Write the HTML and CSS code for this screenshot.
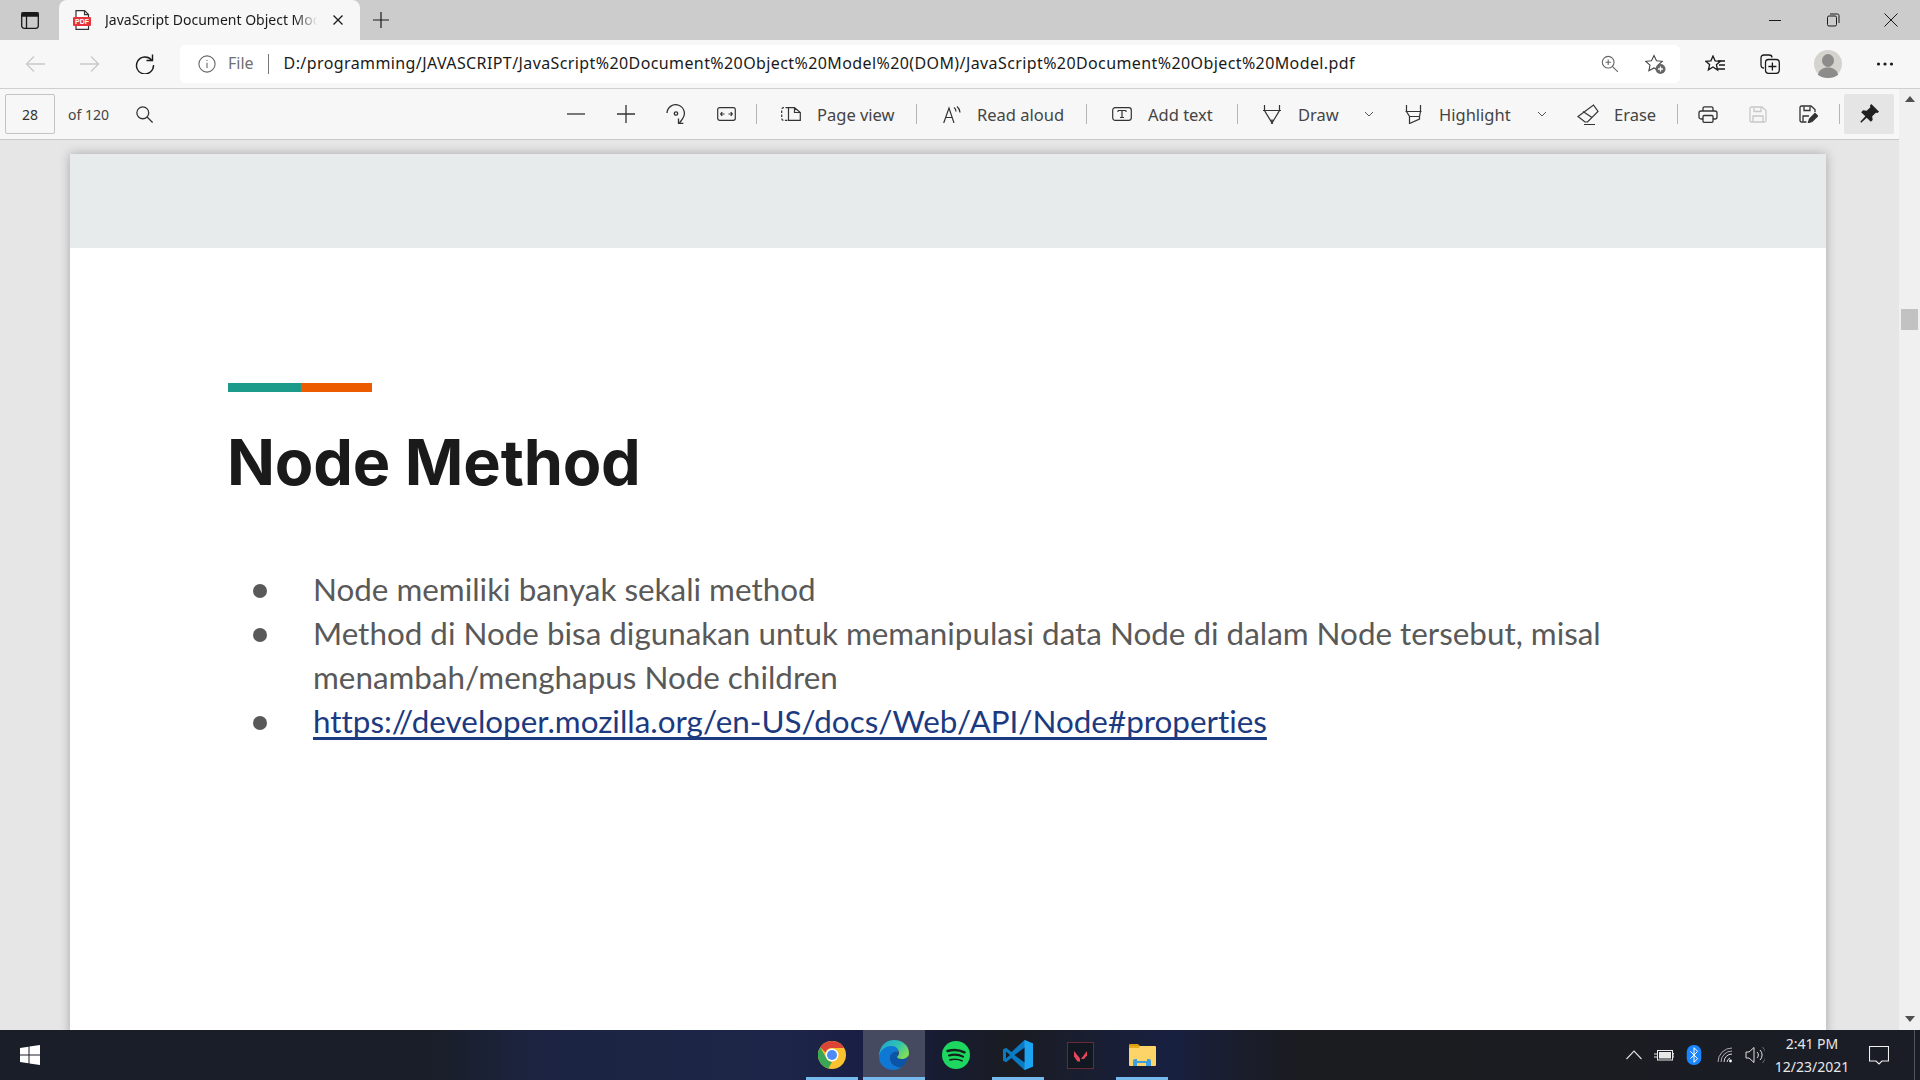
FILE: index.html
```html
<!DOCTYPE html>
<html lang="en">
<head>
<meta charset="utf-8">
<title>JavaScript Document Object Model</title>
<link rel="stylesheet" href="styles.css">
</head>
<body>
<div class="tabstrip">
  <button class="tabs-menu"><svg width="18" height="17" viewBox="0 0 18 17" fill="none" stroke="#1a1a1a" stroke-width="1.300"><rect x=".7" y=".7" width="16.600" height="15.600" rx="2.500"/><path d="M5.500 4v12.300"/><path d="M1 1h16v3H1z" fill="#1a1a1a"/></svg></button>
  <div class="tab">
    <svg class="favicon" width="18" height="20" viewBox="0 0 18 20"><path d="M3 .6h8.500L15.500 4.600V19.400H3z" fill="#fff" stroke="#333" stroke-width="1.200"/><path d="M11.500 .6v4h4" fill="none" stroke="#333" stroke-width="1.200"/><rect x="0" y="7" width="18" height="9" rx="1" fill="#e8323c"/><text x="9" y="14.200" text-anchor="middle" class="pdf-label">PDF</text></svg>
    <span class="tab-title">JavaScript Document Object Model</span>
    <svg class="tab-close" width="10" height="10" viewBox="0 0 10 10" stroke="#1a1a1a" stroke-width="1.300"><path d="M.5.500l9 9M9.500.500l-9 9"/></svg>
  </div>
  <svg class="new-tab" width="16" height="16" viewBox="0 0 16 16" stroke="#1a1a1a" stroke-width="1.200"><path d="M8 0v16M0 8h16"/></svg>
  <div class="window-controls">
    <svg width="58" height="12" viewBox="0 0 12 12" stroke="#1a1a1a" stroke-width="1"><path d="M0 6.500h12"/></svg>
    <svg width="58" height="14" viewBox="0 0 14 14" fill="none" stroke="#1a1a1a" stroke-width="1"><rect x="1.500" y="3" width="9" height="10" rx="1.500"/><path d="M4 1h7.500a1.500 1.500 0 0 1 1.500 1.500V10"/></svg>
    <svg width="58" height="14" viewBox="0 0 14 14" stroke="#1a1a1a" stroke-width="1"><path d="M0.500 0.500l13 13M13.500 0.500l-13 13"/></svg>
  </div>
</div>

<div class="navbar">
  <svg class="nav-back" width="20" height="18" viewBox="0 0 20 18" fill="none" stroke="#c9c9c9" stroke-width="1.300"><path d="M20 9H1.500M9 1.500L1.500 9 9 16.500"/></svg>
  <svg class="nav-forward" width="20" height="18" viewBox="0 0 20 18" fill="none" stroke="#c9c9c9" stroke-width="1.300"><path d="M0 9h18.500M11 1.500L18.500 9 11 16.500"/></svg>
  <svg class="nav-reload" width="20" height="20" viewBox="0 0 20 20" fill="none" stroke="#1a1a1a" stroke-width="1.400"><path d="M16.500 6A8.500 8.500 0 1 0 18.500 11"/><path d="M17.500 0.500V6.500h-6"/></svg>
  <div class="address">
    <svg width="18" height="18" viewBox="0 0 20 20" fill="none" stroke="#666" stroke-width="1.200"><circle cx="10" cy="10" r="9"/><path d="M10 8.500v6M10 5.500v1.300"/></svg>
    <span class="addr-file">File</span>
    <span class="addr-sep"></span>
    <span class="addr-url">D:/programming/JAVASCRIPT/JavaScript%20Document%20Object%20Model%20(DOM)/JavaScript%20Document%20Object%20Model.pdf</span>
    <svg class="addr-zoom" width="18" height="18" viewBox="0 0 20 20" fill="none" stroke="#666" stroke-width="1.200"><circle cx="8" cy="8" r="6.500"/><path d="M12.800 12.800l6 6M8 5v6M5 8h6"/></svg>
    <svg class="addr-fav" width="22" height="20" viewBox="0 0 22 20"><path d="M10 1.500l2.500 5.200 5.700.6-4.200 3.900 1.100 5.500-5.100-2.800-5.100 2.800L6 11.200 1.800 7.300l5.700-.6z" fill="none" stroke="#444" stroke-width="1.100"/><circle cx="16.500" cy="15" r="5" fill="#666"/><path d="M16.500 12.500v5M14 15h5" stroke="#fff" stroke-width="1.300"/></svg>
  </div>
  <svg class="nav-favs" width="20" height="18" viewBox="0 0 20 18" fill="none" stroke="#1a1a1a" stroke-width="1.300"><path d="M8 1l2.100 4.800 5.200.5-3.900 3.400 1.200 5.300L8 12l-4.600 2.900 1.200-5.300L.7 6.300l5.200-.5z"/><path d="M13 6h7M14 10h6M13 14h7"/></svg>
  <svg class="nav-coll" width="20" height="20" viewBox="0 0 20 20" fill="none" stroke="#1a1a1a" stroke-width="1.300"><path d="M4 14c-2 0-3-1-3-3V4c0-2 1-3 3-3h5c2 0 3 1 3 2.500"/><rect x="5.500" y="5.500" width="13.800" height="13.800" rx="3"/><path d="M12.400 8.500v8M8.400 12.500h8"/></svg>
  <svg class="nav-avatar" width="28" height="28" viewBox="0 0 28 28"><circle cx="14" cy="14" r="14" fill="#d4d3ce"/><ellipse cx="14" cy="10.500" rx="6" ry="6.500" fill="#8c8c8a"/><path d="M4 25c.5-5 5-7.500 10-7.500S23.500 20 24 25c-2.800 2-6 3-10 3s-7.200-1-10-3z" fill="#8c8c8a"/></svg>
  <svg class="nav-more" width="18" height="4" viewBox="0 0 18 4" fill="#1a1a1a"><circle cx="2.500" cy="2" r="1.600"/><circle cx="9" cy="2" r="1.600"/><circle cx="15.500" cy="2" r="1.600"/></svg>
</div>

<div class="workspace">
  <div class="viewer-col">
    <div class="pdfbar">
      <div class="page-box">28</div>
      <span class="page-total">of 120</span>
      <svg class="pdf-search" width="17" height="17" viewBox="0 0 20 20" fill="none" stroke="#333" stroke-width="1.500"><circle cx="8" cy="8" r="7"/><path d="M13 13l6.500 6.500"/></svg>

      <div class="tools">
        <div class="icon-btn"><svg width="18" height="18" viewBox="0 0 18 18" stroke="#333" stroke-width="1.300"><path d="M0 9h18"/></svg></div>
        <div class="icon-btn"><svg width="18" height="18" viewBox="0 0 18 18" stroke="#333" stroke-width="1.300"><path d="M0 9h18M9 0v18"/></svg></div>
        <div class="icon-btn"><svg width="20" height="20" viewBox="0 0 20 20" fill="none" stroke="#333" stroke-width="1.300"><path d="M1 9a8.700 8.700 0 1 1 15.500 5.800L13.500 19"/><path d="M12.500 14.500v4.800h4.800"/><circle cx="10" cy="9.500" r="1.700"/></svg></div>
        <div class="icon-btn"><svg width="19" height="14" viewBox="0 0 19 14" fill="none" stroke="#333" stroke-width="1.200"><rect x=".7" y=".7" width="17.600" height="12.600" rx="2"/><path d="M3.500 7h4M3.500 7l1.800-1.800M3.500 7l1.800 1.800M11.500 7h4M15.500 7l-1.800-1.800M15.500 7l-1.800 1.800"/></svg></div>
        <span class="sep sep-first"></span>
        <div class="tool tool-page"><svg width="20" height="14" viewBox="0 0 20 14" fill="none" stroke="#333" stroke-width="1.200"><path d="M7 .7H2.500A1.800 1.800 0 0 0 .7 2.500v9a1.800 1.800 0 0 0 1.800 1.800H7" stroke-dasharray="2.500 1.500"/><path d="M7.500.7h6l5.800 4.800v7.800H7.500zM13.500.7v4.800h5.800"/></svg><span>Page view</span></div>
        <span class="sep"></span>
        <div class="tool tool-read"><svg width="19" height="17" viewBox="0 0 19 17" fill="none" stroke="#333" stroke-width="1.200"><path d="M.7 17L6 2l5 15M2.500 11.500h7"/><path d="M11 1.500a5 5 0 0 1 2 4M14 .5a8 8 0 0 1 3 6"/></svg><span>Read aloud</span></div>
        <span class="sep"></span>
        <div class="tool tool-add"><svg width="20" height="14" viewBox="0 0 20 14" fill="none" stroke="#333" stroke-width="1.200"><rect x=".7" y=".7" width="18.600" height="12.600" rx="2.500"/><path d="M6 3.500h8M10 3.500v7M8 10.500h4M6 3.500V5M14 3.500V5"/></svg><span>Add text</span></div>
        <span class="sep"></span>
        <div class="tool tool-draw"><svg width="20" height="19" viewBox="0 0 20 19" fill="none" stroke="#333" stroke-width="1.200"><path d="M2.500 0v5.500L10 18l7.500-12.500V0M1 5.500h18"/><path d="M10 14.500V19" stroke-width="1.600"/></svg><span>Draw</span><svg class="chev" width="10" height="6" viewBox="0 0 10 6" fill="none" stroke="#555" stroke-width="1"><path d="M1 1l4 4 4-4"/></svg></div>
        <div class="tool tool-high"><svg width="17" height="19" viewBox="0 0 17 19" fill="none" stroke="#333" stroke-width="1.200"><path d="M1.500 0v6.500h14V0M.5 6.500h16M1.500 6.500l3 5v7l10-4.500v-2.500l1-5M4.500 11.500h10"/></svg><span>Highlight</span><svg class="chev" width="10" height="6" viewBox="0 0 10 6" fill="none" stroke="#555" stroke-width="1"><path d="M1 1l4 4 4-4"/></svg></div>
        <div class="tool tool-erase"><svg width="22" height="21" viewBox="0 0 22 21" fill="none" stroke="#333" stroke-width="1.200"><path d="M16.500 1l4.500 6.500L10.500 18H8l-7-5.500zM6 7.500l9 6M7 20.500h11"/></svg><span>Erase</span></div>
        <span class="sep"></span>
        <div class="icon-btn print-btn"><svg width="20" height="17" viewBox="0 0 20 17" fill="none" stroke="#333" stroke-width="1.300"><path d="M5 5V2.300A1.500 1.500 0 0 1 6.500.8h7A1.500 1.500 0 0 1 15 2.300V5M5 13H3a2 2 0 0 1-2-2V7a2 2 0 0 1 2-2h14a2 2 0 0 1 2 2v4a2 2 0 0 1-2 2h-2"/><rect x="5" y="9.500" width="10" height="6.800" rx="1"/></svg></div>
        <div class="icon-btn"><svg width="18" height="17" viewBox="0 0 18 17" fill="none" stroke="#c8c8c8" stroke-width="1.300"><path d="M1 2.500A1.500 1.500 0 0 1 2.500 1H13l4 3.500v10A1.500 1.500 0 0 1 15.500 16h-13A1.500 1.500 0 0 1 1 14.500z"/><path d="M5 1.500v4h7v-4M4 16v-6h10v6"/></svg></div>
        <div class="icon-btn"><svg width="19" height="18" viewBox="0 0 19 18" fill="none" stroke="#333" stroke-width="1.300"><path d="M7.500 17H2.500A1.500 1.500 0 0 1 1 15.500V2.500A1.500 1.500 0 0 1 2.500 1H12l4 3.500V7"/><path d="M5 1.500v4h6v-4M4 16.500V11h6"/><path d="M9.500 17.500l1-3.500 5.500-5.500 2.500 2.500-5.500 5.500z" fill="#333"/></svg></div>
        <span class="sep sep-last"></span>
        <div class="pin-btn"><svg width="22" height="22" viewBox="0 0 24 24"><path d="M14.500 1L23 9.500l-2 1.500-1.500-.5-4 4 .5 4-2 2-4.500-4.500-6 5.500-1-1 5.500-6L3.500 10l2-2 4 .5 4-4L13 3z" fill="#1f1f1f"/></svg></div>
      </div>
    </div>

    <main class="viewer">
      <article class="page">
        <div class="page-band"></div>
        <div class="page-body">
          <div class="accent"><span class="accent-green"></span><span class="accent-orange"></span></div>
          <h1>Node Method</h1>
          <ul class="points">
            <li>Node memiliki banyak sekali method</li>
            <li>Method di Node bisa digunakan untuk memanipulasi data Node di dalam Node tersebut, misal menambah/menghapus Node children</li>
            <li><a href="#">https://developer.mozilla.org/en-US/docs/Web/API/Node#properties</a></li>
          </ul>
        </div>
      </article>
    </main>
  </div>
  <aside class="scrollbar">
    <span class="arrow-up"></span>
    <span class="thumb"></span>
    <span class="arrow-down"></span>
  </aside>
</div>

<footer class="taskbar">
  <svg class="win-logo" width="20" height="20" viewBox="0 0 20 20" fill="#fff"><path d="M0 3l8.500-1.200v7.700H0zM9.500 1.600L20 0v9.500H9.500zM0 10.500h8.500v7.700L0 17zM9.500 10.500H20V20L9.500 18.400z"/></svg>
  <div class="apps">
    <div class="app running"><svg width="28" height="28" viewBox="0 0 28 28"><circle cx="14" cy="14" r="14" fill="#f9c22e"/><path d="M14 0a14 14 0 0 1 12.100 7H14a7 7 0 0 0-6.500 4.400L2.300 6.200A14 14 0 0 1 14 0z" fill="#db4437"/><path d="M2.300 6.200l5.900 10.600A7 7 0 0 0 14 21l-3.700 6.500A14 14 0 0 1 2.300 6.200z" fill="#3aa757"/><circle cx="14" cy="14" r="6.500" fill="#fff"/><circle cx="14" cy="14" r="5" fill="#4c8bf5"/></svg></div>
    <div class="app active"><svg width="30" height="30" viewBox="0 0 30 30"><defs><linearGradient id="e1" x1="0" y1="0" x2="1" y2=".6"><stop offset="0" stop-color="#1ba1d8"/><stop offset=".6" stop-color="#2fc4b0"/><stop offset="1" stop-color="#7fdc5a"/></linearGradient></defs><path d="M15 0c9 0 15 6 15 13 0 4-3 6-7 6-3 0-5-1-5-2 0-1 2-1 2-4 0-4-4-7-9-6-6 1-10 5-11 10C0 7 6 0 15 0z" fill="url(#e1)"/><path d="M0 17c1-7 6-11 12-11 5 0 8 3 7 6-3-1-8 1-8 6 0 5 5 10 12 9-3 2-6 3-9 3C6 30 0 24 0 17z" fill="#0f78d4"/><path d="M11 18c0-5 5-7 8-6 1 3-1 4-1 5 0 2 3 3 6 2 2 0 4-1 5-3-1 5-3 8-6 11-7 1-12-4-12-9z" fill="#0b55a8"/></svg></div>
    <div class="app"><svg width="28" height="28" viewBox="0 0 28 28"><circle cx="14" cy="14" r="14" fill="#1ed760"/><g fill="none" stroke="#14231a" stroke-linecap="round"><path d="M5.500 10c6-1.800 12-1.300 17 1.300" stroke-width="2.500"/><path d="M7 14.500c5-1.400 10-1 14 1.200" stroke-width="2.100"/><path d="M8 18.800c4.500-1 8.500-.7 12 1" stroke-width="1.700"/></g></svg></div>
    <div class="app running"><svg width="30" height="30" viewBox="0 0 30 30"><path d="M21.500 0L30 3.500v23L21.500 30 8.500 18l-5.500 4.300L0 20.500v-11l3-1.800L8.500 12z" fill="#0a7ac2"/><path d="M21.500 0L30 3.500v23L21.500 30z" fill="#1ea3f0"/><path d="M21.500 7.500v15L11.500 15z" fill="#161a24"/><path d="M3 11.500L7 15l-4 3.500z" fill="#161a24"/></svg></div>
    <div class="app"><svg width="27" height="27" viewBox="0 0 27 27"><rect x=".5" y=".5" width="26" height="26" fill="#111822" stroke="#6a2a35" stroke-width="1"/><path d="M7 9l6 7.500v3h-2.500L7 14.500z" fill="#e8475a"/><path d="M20 9v4.500l-3 3.500h-3z" fill="#e8475a"/></svg></div>
    <div class="app running"><svg width="28" height="24" viewBox="0 0 28 24"><path d="M1 2a1 1 0 0 1 1-1h8l2 2h-11z" fill="#d99e0c"/><path d="M1 3h26a1 1 0 0 1 1 1v18a1 1 0 0 1-1 1H2a1 1 0 0 1-1-1z" fill="#fdd468"/><path d="M1 3h11l-1 2H1z" fill="#e8ae1e"/><path d="M5 23v-5a2 2 0 0 1 2-2h2v2h10v-2h2a2 2 0 0 1 2 2v5h-5v-3h-9v3z" fill="#3f9ee0"/></svg></div>
  </div>
  <div class="tray">
    <svg width="16" height="10" viewBox="0 0 16 10" fill="none" stroke="#e0e0e0" stroke-width="1.100"><path d="M.5 9l7.500-8 7.500 8"/></svg>
    <svg width="20" height="12" viewBox="0 0 20 12" fill="none" stroke="#e8e8e8" stroke-width="1"><rect x="3.500" y="1.500" width="15" height="9.500"/><rect x="5" y="3" width="12" height="6.500" fill="#e8e8e8" stroke="none"/><path d="M0 5h3M0 8h3M18.500 4.500H20v3.500h-1.500"/></svg>
    <svg width="16" height="20" viewBox="0 0 16 22"><rect width="16" height="22" rx="7.500" fill="#1a85ff"/><path d="M4 7l8 8-4 4V3l4 4-8 8" fill="none" stroke="#fff" stroke-width="1.100"/></svg>
    <svg class="tray-wifi" width="16" height="16" viewBox="0 0 16 16" fill="none" stroke="#dcdcdc" stroke-width="1"><path d="M1 15A14 14 0 0 1 15 1M4 15A11 11 0 0 1 15 4" opacity=".75"/><path d="M7 15a8 8 0 0 1 8-8M10 15a5 5 0 0 1 3-4"/><circle cx="13.500" cy="14" r="1.400" fill="#fff" stroke="none"/></svg>
    <svg width="20" height="18" viewBox="0 0 20 18" fill="none" stroke="#e0e0e0" stroke-width="1"><path d="M1 6v6h3l5 4.500V1.500L4 6zM12 6a4 4 0 0 1 0 6M15 4a7 7 0 0 1 0 10"/><path d="M17.500 1a11 11 0 0 1 0 16" opacity=".4"/></svg>
    <div class="clock"><span>2:41 PM</span><span>12/23/2021</span></div>
    <svg class="notify" width="20" height="19" viewBox="0 0 20 19" fill="none" stroke="#f0f0f0" stroke-width="1.100"><path d="M.5.500h19v14.500H13l-3 3-3-3H.500z"/></svg>
    <span class="show-desktop"></span>
  </div>
</footer>
</body>
</html>
```
FILE: styles.css
```css
* { box-sizing: border-box; }
html, body { margin: 0; height: 100%; }
body {
  width: 1920px; height: 1080px; overflow: hidden;
  display: flex; flex-direction: column;
  font-family: "Noto Sans", "Open Sans", sans-serif;
  background: #e6e6e6;
}
svg { display: block; flex: none; }
button { border: 0; background: none; padding: 0; }

/* tab strip */
.tabstrip { height: 40px; flex: none; background: #cccccc; display: flex; align-items: flex-start; }
.tabs-menu { width: 59px; height: 40px; display: flex; align-items: center; justify-content: center; }
.tab { width: 301px; height: 40px; background: #f7f7f7; border-radius: 8px 8px 0 0; display: flex; align-items: center; padding-left: 14px; }
.favicon { margin-right: 14px; }
.pdf-label { font: 700 7px "Liberation Sans", sans-serif; fill: #fff; }
.tab-title {
  width: 217px; font-size: 14px; line-height: 20px; padding-bottom: 1px; color: #1a1a1a; white-space: nowrap; overflow: hidden;
  -webkit-mask-image: linear-gradient(to right, #000 88%, transparent 98%);
  mask-image: linear-gradient(to right, #000 88%, transparent 98%);
}
.tab-close { margin-left: 11px; }
.new-tab { margin: 12px 0 0 13px; }
.window-controls { margin-left: auto; height: 40px; display: flex; align-items: center; }

/* nav bar */
.navbar { height: 49px; flex: none; background: #f7f7f7; border-bottom: 1px solid #cfcfcf; display: flex; align-items: center; padding-left: 25px; padding-bottom: 1px; }
.nav-forward { margin-left: 35px; }
.nav-reload { margin-left: 35px; }
.address { width: 1500px; height: 38px; margin-left: 25px; background: #fff; border-radius: 6px; display: flex; align-items: center; padding-left: 18px; }
.addr-file { margin-left: 12px; font-size: 16px; color: #707070; line-height: 20px; padding-bottom: 2px; }
.addr-sep { width: 1px; height: 20px; background: #777; margin: 0 15px 0 14px; }
.addr-url { font-size: 16px; letter-spacing: .4px; color: #1a1a1a; white-space: nowrap; line-height: 20px; padding-bottom: 2px; }
.addr-zoom { margin-left: auto; }
.addr-fav { margin: 0 14px 0 25px; }
.nav-favs { margin-left: 25px; }
.nav-coll { margin-left: 35px; }
.nav-avatar { margin-left: 34px; }
.nav-more { margin-left: 34px; }

/* layout */
.workspace { flex: 1; min-height: 0; display: flex; }
.viewer-col { flex: 1; min-width: 0; display: flex; flex-direction: column; }

/* pdf bar */
.pdfbar { height: 51px; flex: none; background: #f7f7f7; border-bottom: 1px solid #c9c9c9; display: flex; align-items: center; padding: 0 5px; }
.page-box { width: 50px; height: 40px; background: #f7f7f7; border: 1px solid #c4c4c4; border-radius: 2px; display: flex; align-items: center; justify-content: center; font-size: 14px; color: #333; }
.page-total { margin-left: 13px; font-size: 14px; color: #444; }
.pdf-search { margin-left: 27px; }
.tools { margin-left: auto; display: flex; align-items: center; color: #444; font-size: 16.5px; }
.icon-btn { width: 50px; height: 40px; display: flex; align-items: center; justify-content: center; }
.sep { width: 1px; height: 20px; background: #b5b5b5; flex: none; }
.sep-first { margin-left: 5px; }
.sep-last { margin-left: 6px; }
.print-btn { margin-left: 5px; }
.tool { height: 40px; flex: none; display: flex; align-items: center; gap: 16px; padding-left: 24px; white-space: nowrap; }
.tool-page { width: 159px; }
.tool-read { width: 169px; padding-left: 26px; gap: 15px; }
.tool-add { width: 150px; padding-left: 25px; gap: 16px; }
.tool-draw { width: 142px; }
.tool-high { width: 197px; padding-left: 25px; gap: 17px; }
.tool-erase { width: 100px; padding-left: 0; gap: 15px; }
.tool-draw .chev { margin-left: 9px; }
.tool-high .chev { margin-left: 9px; }
.pin-btn { width: 50px; height: 40px; margin-left: 4px; background: #e5e5e5; border-radius: 2px; display: flex; align-items: center; justify-content: center; }

/* viewer */
.viewer { flex: 1; min-height: 0; overflow: hidden; background: #e6e6e6; padding: 14px 0 0 70px; }
.page { width: 1756px; height: 1200px; background: #fff; box-shadow: 0 0 10px rgba(0,0,0,.28); }
.page-band { height: 94px; background: #e8ebec; }
.page-body { padding: 135px 0 0 158px; }
.accent { display: flex; height: 9px; }
.accent-green { width: 73px; background: #1c9b8a; }
.accent-orange { width: 71px; background: #ec5b00; }
h1 { margin: 24px 0 0 -1px; font: 700 63px/92px "Inter", "Lato", sans-serif; letter-spacing: -.2px; color: #1a1a1a; }
.points { list-style: none; margin: 59px 0 0; padding: 0 0 0 85px; width: 1540px; font: 31.4px/44px "Lato", sans-serif; font-variant-ligatures: none; color: #595959; }
.points li { position: relative; }
.points li::before { content: ""; position: absolute; left: -60px; top: 17px; width: 14px; height: 14px; border-radius: 50%; background: #595959; }
.points a { color: #1c3a80; text-decoration-thickness: 3px; text-underline-offset: 4px; text-decoration-skip-ink: none; }

/* scrollbar */
.scrollbar { width: 21px; flex: none; background: #f0f0f0; display: flex; flex-direction: column; align-items: center; padding: 7px 0; }
.arrow-up { width: 0; height: 0; border: 5px solid transparent; border-top: 0; border-bottom: 6px solid #505050; }
.thumb { width: 17px; height: 21px; background: #c2c2c2; margin-top: 207px; }
.arrow-down { width: 0; height: 0; margin-top: auto; margin-bottom: 1px; border: 5px solid transparent; border-bottom: 0; border-top: 6px solid #505050; }

/* taskbar */
.taskbar {
  height: 50px; flex: none; display: flex; align-items: center; position: relative;
  background: linear-gradient(90deg, #1a1e28 0, #1a1e28 430px, #1c2442 540px, #1d2648 780px, #1a1f45 860px, #181c30 950px, #1a1c22 1010px, #182040 1170px, #1a1d2c 1240px, #1b1c1f 1310px, #1a1d26 100%);
}
.win-logo { margin-left: 20px; }
.apps { position: absolute; left: 801px; top: 0; height: 50px; display: flex; }
.app { width: 62px; height: 50px; display: flex; align-items: center; justify-content: center; position: relative; }
.app.active { background: #464a60; }
.app.running::after, .app.active::after { content: ""; position: absolute; left: 5px; right: 5px; bottom: 0; height: 3px; background: #76b9ed; }
.app.active::after { left: 0; right: 0; }
.tray { margin-left: auto; height: 50px; display: flex; align-items: center; gap: 12px; color: #e8e8e8; }
.tray-wifi { margin-left: 3px; }
.clock { display: flex; flex-direction: column; align-items: center; font-size: 14px; line-height: 23px; width: 76px; margin-left: -3px; }
.notify { margin-left: 7px; }
.show-desktop { width: 1px; height: 50px; background: #50535c; margin-left: 13px; margin-right: 5px; }
```
